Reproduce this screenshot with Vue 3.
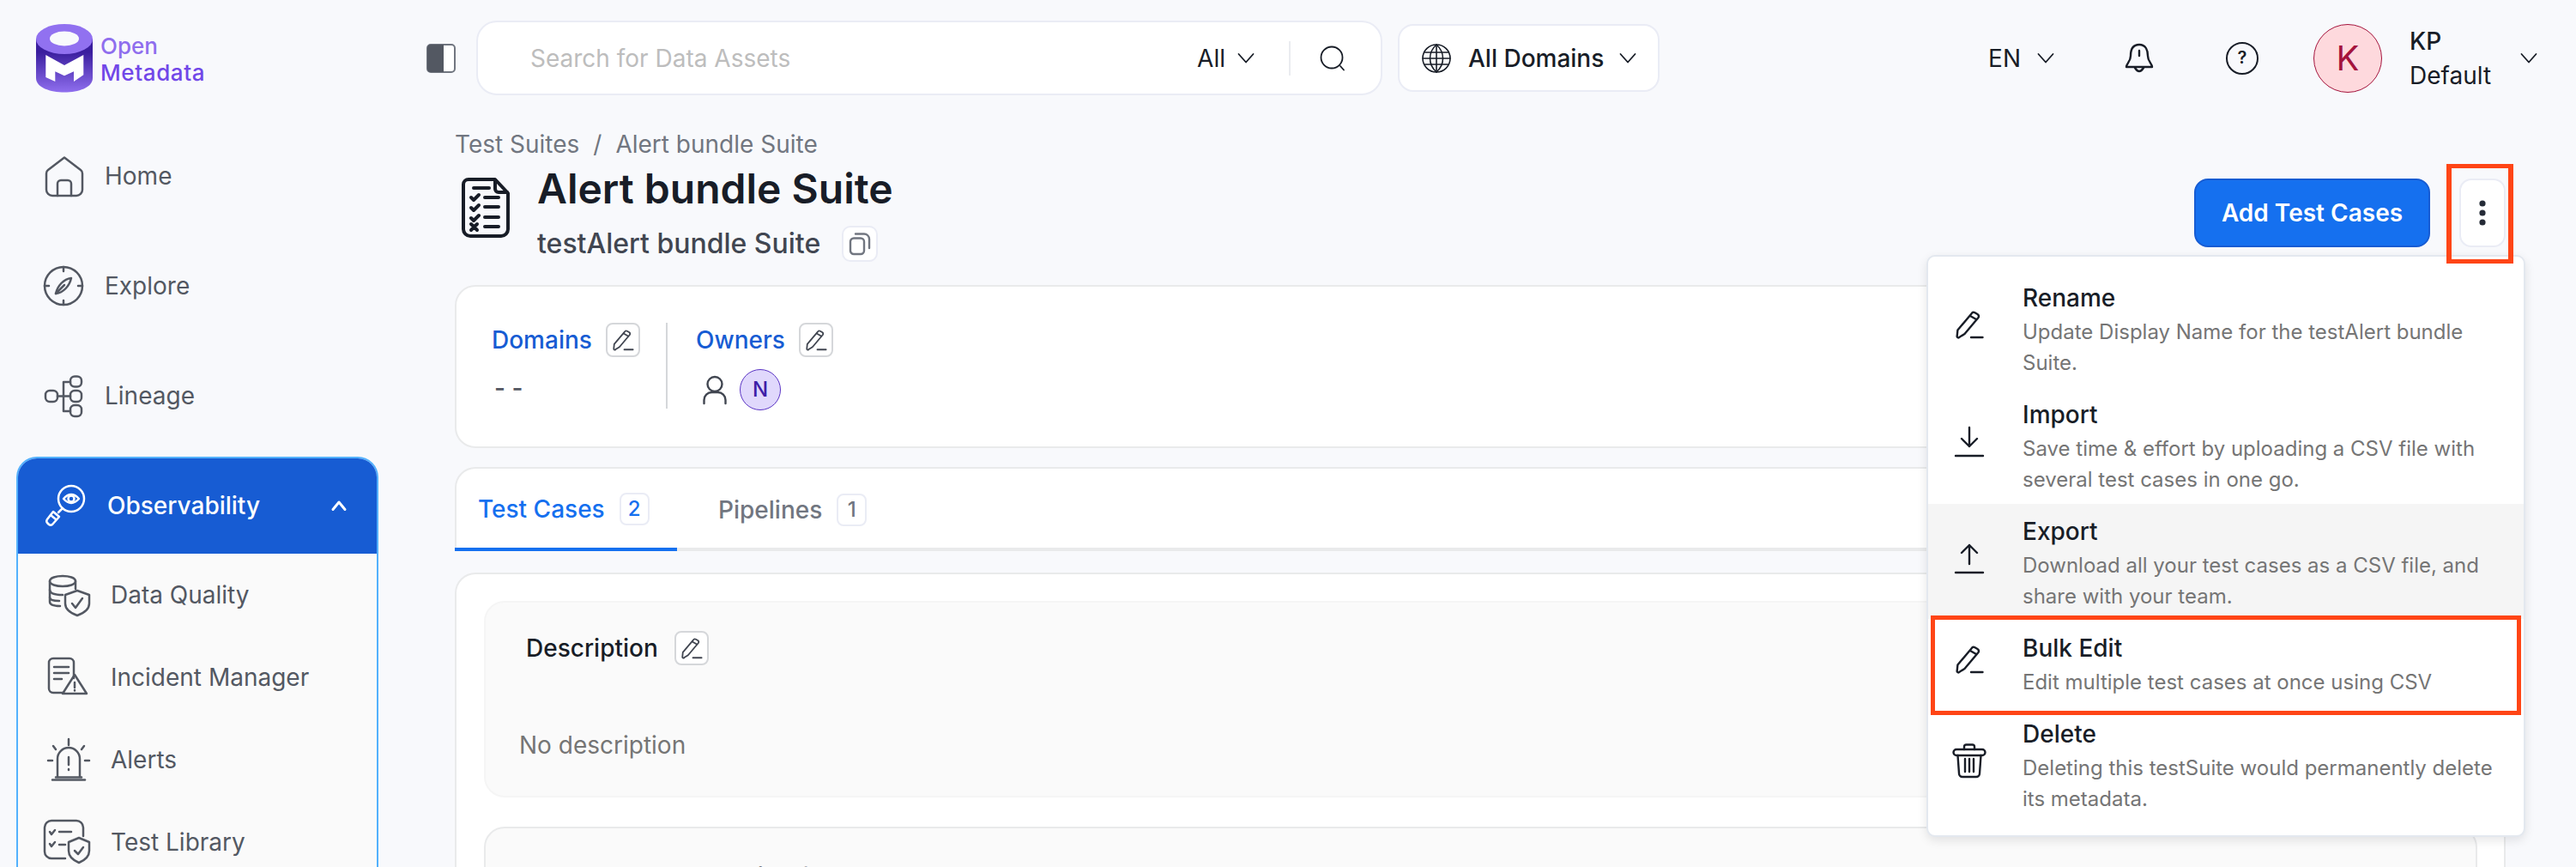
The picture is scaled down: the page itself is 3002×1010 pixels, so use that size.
<script setup>
import { h } from 'vue'

const icons = {
  home: { w: 48, h: 48, sw: 2.5, d: ['M25 2.5 L6 17 Q4 18.5 4 21 V40 a7 7 0 0 0 7 7 H39 a7 7 0 0 0 7-7 V21 Q46 18.5 44 17 Z', 'M17 47 V33 a4 4 0 0 1 4-4 h8 a4 4 0 0 1 4 4 V47'] },
  explore: { w: 48, h: 48, sw: 2.5, d: ['M24 2 a22 22 0 1 0 0 44 a22 22 0 1 0 0-44 Z', 'M24 2v5 M24 41v5 M2 24h5 M41 24h5', 'M33 15 C24 16 17 24 15 33 C24 32 31 24 33 15 Z', 'M15 33 L25 23'] },
  lineage: { w: 48, h: 48, sw: 2.5, d: ['M37 1.5 h3 a5 5 0 0 1 5 5 v2 a5 5 0 0 1-5 5 h-3 a5 5 0 0 1-5-5 v-2 a5 5 0 0 1 5-5 Z', 'M37 18 h3 a5 5 0 0 1 5 5 v3 a5 5 0 0 1-5 5 h-3 a5 5 0 0 1-5-5 v-3 a5 5 0 0 1 5-5 Z', 'M37 35 h3 a5 5 0 0 1 5 5 v3 a5 5 0 0 1-5 5 h-3 a5 5 0 0 1-5-5 v-3 a5 5 0 0 1 5-5 Z', 'M8 18 h4 a5 5 0 0 1 5 5 v3 a5 5 0 0 1-5 5 h-4 a5 5 0 0 1-5-5 v-3 a5 5 0 0 1 5-5 Z', 'M17 24.5 H32 M24 8 V42 M24 8 H32 M24 42 H32'] },
  observability: { w: 48, h: 48, sw: 2.5, d: ['M31 1 a15 15 0 1 0 0 30 a15 15 0 1 0 0-30 Z', 'M22 16 Q31 6 40 16 Q31 26 22 16 Z', 'M31 12.5 a3.5 3.5 0 1 0 0 7 a3.5 3.5 0 1 0 0-7 Z', 'M21 27 L16 32', 'M10 31 L17 37 L9 46 Q7 47.5 5 46 L3 44 Q1.5 42 3 40 Z', 'M7 35 l6 5'] },
  quality: { w: 48, h: 48, sw: 2.5, d: ['M2 8 C2 0 32 0 32 8 C32 16 2 16 2 8 Z', 'M2 8 V32 Q2 37 14 37', 'M32 8 V17', 'M2 18 Q2 24 17 24', 'M2 27 Q2 31 13 31', 'M34 19 L48 24 V34 Q48 43 34 48 Q20 43 20 34 V24 Z', 'M28 34 l4 5 l8-11'] },
  incident: { w: 48, h: 48, sw: 2.5, d: ['M18 42 H6 a5 5 0 0 1-5-5 V7 a5 5 0 0 1 5-5 H25 a5 5 0 0 1 5 5 V25', 'M7 12h17 M7 19h17 M7 26h9', 'M31 21 L45 43 H17 Z', 'M31 30 v6 M31 39 v.5'] },
  alerts: { w: 48, h: 48, sw: 2.5, d: ['M24 0 v7 M6 8 l3 4 M42 8 l-3 4 M0 25 h5 M43 25 h5', 'M11 44 V23 a13 13 0 0 1 26 0 V44', 'M24 21 v9 M24 35 v1', 'M9 44.5 H39', 'M5 47.5 H43'] },
  library: { w: 48, h: 48, sw: 2.5, d: ['M20 43 H4 a8 8 0 0 1-8-8 V7 a8 8 0 0 1 8-8 H33 a8 8 0 0 1 8 8 V17', 'M2 12 l2 3 4-5 M13 12 h14 M2 26 l2 3 4-5 M13 27 h7', 'M36 19 L48 24 V34 Q48 43 36 48 Q24 43 24 34 V24 Z', 'M31 34 l4 4 6-8'] },
  pencil: { w: 32, h: 32, sw: 2.4, d: ['M18.5 3.5 a3 3 0 0 1 4-1.2 l3 1.7 a3 3 0 0 1 1 4 L10.5 27 L4.5 30.8 a1.6 1.6 0 0 1-2.8-1.4 L2.4 22.5 Z', 'M17 6 L24 10', 'M18 31 H31.5'] },
  download: { w: 34, h: 35, sw: 2.4, d: ['M17 1 V23 M8 14 L17 23 L26 14', 'M1 34 H33'] },
  upload: { w: 34, h: 35, sw: 2.4, d: ['M17 24 V2 M8 11 L17 2 L26 11', 'M1 34 H33'] },
  trash: { w: 36, h: 40, sw: 2.4, d: ['M3 7 a2 2 0 0 0 0 7 H33 a2 2 0 0 0 0-7 Z', 'M12 7 V4 a2.5 2.5 0 0 1 2.5-2.5 H21.5 a2.5 2.5 0 0 1 2.5 2.5 V7', 'M4.5 14 L6 35 a4 4 0 0 0 4 4 H26 a4 4 0 0 0 4-4 L31.5 14', 'M13 18 V33 M18 18 V33 M23 18 V33'] },
  chevron: { w: 20, h: 12, sw: 1.8, d: ['M1.5 1 L10 10.5 L18.5 1'] },
  chevronUp: { w: 20, h: 12, sw: 3, d: ['M3 10.5 L10 2 L17 10.5'] },
  search: { w: 30, h: 30, sw: 1.8, d: ['M14 1.5 a12.5 12.5 0 1 0 0 25 a12.5 12.5 0 1 0 0-25 Z', 'M24 24 L28 28.5'] },
  globe: { w: 34, h: 34, sw: 1.6, d: ['M17 1 a16 16 0 1 0 0 32 a16 16 0 1 0 0-32 Z', 'M17 1 C7 10 7 24 17 33 C27 24 27 10 17 1 Z', 'M17 1 V33 M1 17 H33', 'M3.5 10 H30.5 M3.5 24 H30.5'] },
  bell: { w: 34, h: 36, sw: 2.4, d: ['M17 2 C9 2 7 9 7 15 C7 22 2 24 2 28 H32 C32 24 27 22 27 15 C27 9 25 2 17 2 Z', 'M12 29 Q17 37 22 29', 'M17 9 v6'] },
  copy: { w: 24, h: 26, sw: 2.4, d: ['M5 6.5 H13 a4 4 0 0 1 4 4 V21 a4 4 0 0 1-4 4 H5 a4 4 0 0 1-4-4 V10.5 a4 4 0 0 1 4-4 Z', 'M7 1.5 H17 a6 6 0 0 1 6 6 V18'] },
  user: { w: 28, h: 34, sw: 2.4, d: ['M14 2 a8.5 8.5 0 1 0 0 17 a8.5 8.5 0 1 0 0-17 Z', 'M1.5 33 V29 a9 9 0 0 1 9-9 H17.5 a9 9 0 0 1 9 9 V33'] },
  suite: { w: 56, h: 70, sw: 4, d: ['M8 2 H39 L54 18 V60 a8 8 0 0 1-8 8 H10 a8 8 0 0 1-8-8 V8 a6 6 0 0 1 6-6 Z', 'M39 3 V13 a4 4 0 0 0 4 4 H53', 'M14 12 H32', 'M11 23 l3 3 6-6 M27 23 H43', 'M11 35 l3 3 6-6 M27 34 H43', 'M11 47 l3 3 6-6 M27 46 H43', 'M11 54 l7 7 M18 54 l-7 7 M27 57 H43'] },
}

const Ico = (props) => {
  const icon = icons[props.name]
  return h(
    'svg',
    {
      width: icon.w,
      height: icon.h,
      viewBox: `0 0 ${icon.w} ${icon.h}`,
      fill: 'none',
      stroke: 'currentColor',
      'stroke-width': icon.sw,
      'stroke-linecap': 'round',
      'stroke-linejoin': 'round',
      overflow: 'visible',
    },
    icon.d.map((d) => h('path', { d })),
  )
}
Ico.props = ['name']

const navItems = [
  { label: 'Home', icon: 'home' },
  { label: 'Explore', icon: 'explore' },
  { label: 'Lineage', icon: 'lineage' },
]

const subItems = [
  { label: 'Data Quality', icon: 'quality' },
  { label: 'Incident Manager', icon: 'incident' },
  { label: 'Alerts', icon: 'alerts' },
  { label: 'Test Library', icon: 'library' },
]

const menuItems = [
  { title: 'Rename', desc: 'Update Display Name for the testAlert bundle Suite.', icon: 'pencil' },
  { title: 'Import', desc: 'Save time & effort by uploading a CSV file with several test cases in one go.', icon: 'download' },
  { title: 'Export', desc: 'Download all your test cases as a CSV file, and share with your team.', icon: 'upload', hover: true },
  { title: 'Bulk Edit', desc: 'Edit multiple test cases at once using CSV', icon: 'pencil' },
  { title: 'Delete', desc: 'Deleting this testSuite would permanently delete its metadata.', icon: 'trash' },
]

const columns = ['Status', 'Failed/Aborted Reason', 'Last Run', 'Name', 'Table']
</script>

<template>
  <div class="app">
    <header class="topbar">
      <div class="logo">
        <svg width="66" height="80" viewBox="0 0 66 80">
          <defs>
            <linearGradient id="cyl" x1="0" y1="0" x2="0" y2="1">
              <stop offset="0.25" stop-color="#3a1e9e" />
              <stop offset="1" stop-color="#8f6eee" />
            </linearGradient>
          </defs>
          <path d="M0 17 V63 C0 85 66 85 66 63 V17 Z" fill="url(#cyl)" />
          <ellipse cx="33" cy="17.5" rx="33" ry="17.5" fill="#9171f0" />
          <ellipse cx="33" cy="17" rx="17" ry="8.5" fill="#f8f9fc" />
          <path d="M11.3 36 L33 48 L55.3 36 V59.3 L44 67 V55.3 L33 60.3 L22.3 55.3 V67 L11.3 62 Z" fill="#fff" />
        </svg>
        <div class="logo-text">
          <span class="logo-open">Open</span>
          <span class="logo-meta">Metadata</span>
        </div>
      </div>

      <svg class="toggle" width="34" height="34" viewBox="0 0 34 34">
        <rect x="1" y="1" width="32" height="32" rx="4" fill="#fff" stroke="#717680" stroke-width="2" />
        <path d="M5 1 H20 V33 H5 a4 4 0 0 1-4-4 V5 a4 4 0 0 1 4-4 Z" fill="#535862" />
      </svg>

      <div class="search">
        <span class="placeholder">Search for Data Assets</span>
        <span class="search-all">All</span>
        <Ico name="chevron" />
        <span class="search-divider"></span>
        <Ico name="search" />
      </div>

      <div class="domains">
        <Ico name="globe" />
        <span class="domains-label">All Domains</span>
        <Ico name="chevron" />
      </div>

      <div class="top-right">
        <span class="lang">EN</span>
        <Ico name="chevron" class="lang-chevron" />
        <Ico name="bell" class="bell" />
        <span class="help">?</span>
        <span class="avatar">K</span>
        <div class="who">
          <span class="who-name">KP</span>
          <span>Default</span>
        </div>
        <Ico name="chevron" />
      </div>
    </header>

    <div class="body">
      <aside class="sidebar">
        <a v-for="item in navItems" :key="item.label" class="nav-item">
          <Ico :name="item.icon" />
          <span>{{ item.label }}</span>
        </a>
        <div class="nav-group">
          <div class="nav-group-head">
            <Ico name="observability" />
            <span>Observability</span>
            <Ico name="chevronUp" class="group-chevron" />
          </div>
          <a v-for="item in subItems" :key="item.label" class="sub-item">
            <Ico :name="item.icon" />
            <span>{{ item.label }}</span>
          </a>
        </div>
      </aside>

      <main class="main">
        <div class="crumbs">
          <span>Test Suites</span>
          <span class="crumb-sep">/</span>
          <span>Alert bundle Suite</span>
        </div>

        <div class="heading">
          <Ico name="suite" class="suite-icon" />
          <div class="heading-text">
            <h1>Alert bundle Suite</h1>
            <div class="fqn">
              <span>testAlert bundle Suite</span>
              <button class="copy-btn"><Ico name="copy" /></button>
            </div>
          </div>
          <div class="actions">
            <button class="add-btn">Add Test Cases</button>
            <button class="more-btn">
              <svg width="8" height="30" viewBox="0 0 8 30" fill="#252b37">
                <circle cx="4" cy="4" r="3.6" />
                <circle cx="4" cy="15" r="3.6" />
                <circle cx="4" cy="26" r="3.6" />
              </svg>
            </button>
          </div>
        </div>

        <section class="info-card">
          <div class="info-col domains-col">
            <div class="info-label">
              <span>Domains</span>
              <button class="edit-btn"><Ico name="pencil" /></button>
            </div>
            <div class="dashes">- -</div>
          </div>
          <div class="info-col owners-col">
            <div class="info-label">
              <span>Owners</span>
              <button class="edit-btn"><Ico name="pencil" /></button>
            </div>
            <div class="owners">
              <Ico name="user" />
              <span class="owner-avatar">N</span>
            </div>
          </div>
        </section>

        <nav class="tabs">
          <div class="tab tab-active">Test Cases <span class="badge">2</span></div>
          <div class="tab">Pipelines <span class="badge">1</span></div>
        </nav>

        <section class="content">
          <div class="panel desc-panel">
            <div class="desc-head">
              <span>Description</span>
              <button class="edit-btn"><Ico name="pencil" /></button>
            </div>
            <p class="no-desc">No description</p>
          </div>
          <div class="panel table-panel">
            <span v-for="col in columns" :key="col">{{ col }}</span>
          </div>
        </section>
      </main>
    </div>

    <div class="menu">
      <div v-for="item in menuItems" :key="item.title" class="menu-item" :class="{ hovered: item.hover }">
        <span class="menu-icon"><Ico :name="item.icon" /></span>
        <div class="menu-copy">
          <div class="menu-title">{{ item.title }}</div>
          <div class="menu-desc">{{ item.desc }}</div>
        </div>
      </div>
    </div>

    <div class="mark mark-more"></div>
    <div class="mark mark-bulk"></div>
  </div>
</template>

<style scoped>
.app {
  position: relative;
  width: 3002px;
  height: 1010px;
  overflow: hidden;
  background: #f8f9fc;
  color: #181d27;
  font-family: Inter, 'Liberation Sans', sans-serif;
  font-size: 28px;
  line-height: 40px;
}
button {
  font-family: inherit;
  padding: 0;
  cursor: pointer;
}
svg {
  display: block;
  flex: none;
}

.topbar {
  display: flex;
  align-items: center;
  height: 135px;
  padding-right: 45px;
}
.logo {
  display: flex;
  align-items: center;
  width: 497px;
  padding-left: 42px;
  box-sizing: border-box;
  gap: 9px;
}
.logo-text {
  display: flex;
  flex-direction: column;
  font-weight: 500;
  font-size: 26px;
  line-height: 31px;
  letter-spacing: 0.6px;
  margin-top: 2px;
}
.logo-open {
  color: #8f6eee;
  letter-spacing: 0;
}
.logo-meta {
  color: #7147e8;
}
.toggle {
  margin-right: 24px;
}
.search {
  display: flex;
  align-items: center;
  width: 1056px;
  height: 87px;
  box-sizing: border-box;
  padding: 0 41px 0 61px;
  background: #fff;
  border: 2px solid #eaecf5;
  border-radius: 24px;
}
.placeholder {
  flex: 1;
  color: #bdbdbd;
}
.search-all {
  margin-right: 14px;
}
.search-divider {
  width: 2px;
  height: 40px;
  margin: 0 34px 0 40px;
  background: #eaecf0;
}
.domains {
  display: flex;
  align-items: center;
  height: 79px;
  width: 305px;
  box-sizing: border-box;
  margin-left: 18px;
  padding: 0 26px;
  background: #fff;
  border: 2px solid #eaecf5;
  border-radius: 18px;
}
.domains-label {
  margin: 0 18px 0 20px;
  font-weight: 500;
  white-space: nowrap;
}
.top-right {
  display: flex;
  align-items: center;
  margin-left: auto;
}
.lang {
  margin-right: 19px;
}
.lang-chevron {
  margin-right: 82px;
}
.bell {
  margin-right: 84px;
}
.help {
  width: 38px;
  height: 38px;
  box-sizing: border-box;
  margin-right: 64px;
  border: 2.4px solid #181d27;
  border-radius: 50%;
  font-size: 20px;
  font-weight: 600;
  line-height: 33px;
  text-align: center;
}
.avatar {
  width: 80px;
  height: 80px;
  box-sizing: border-box;
  margin-right: 32px;
  background: #fed9dd;
  border: 1.5px solid #a4133c;
  border-radius: 50%;
  color: #a4133c;
  font-size: 40px;
  line-height: 77px;
  text-align: center;
}
.who {
  display: flex;
  flex-direction: column;
  width: 129px;
}
.who-name {
  font-weight: 500;
}

.body {
  display: flex;
}
.sidebar {
  width: 530px;
  flex: none;
  padding-top: 6px;
  box-sizing: border-box;
}
.nav-item {
  display: flex;
  align-items: center;
  gap: 24px;
  height: 128px;
  padding-left: 50px;
  color: #535862;
}
.nav-group {
  width: 422px;
  box-sizing: border-box;
  margin: 7px 0 0 19px;
  border: 2px solid #53b1fd;
  border-bottom: 0;
  border-radius: 24px 24px 0 0;
  background: #fafafa;
  overflow: hidden;
  padding-bottom: 100px;
}
.nav-group-head {
  display: flex;
  align-items: center;
  gap: 25px;
  height: 112px;
  margin-top: -1px;
  padding: 0 34px 0 31px;
  background: #175cd3;
  color: #fff;
  font-weight: 500;
}
.group-chevron {
  margin-left: auto;
}
.sub-item {
  display: flex;
  align-items: center;
  gap: 25px;
  height: 96px;
  padding-left: 35px;
  color: #535862;
}

.main {
  flex: 1;
  padding-right: 82px;
  min-width: 0;
}
.crumbs {
  display: flex;
  height: 36px;
  margin-top: 15px;
  line-height: 36px;
  color: #717680;
}
.crumb-sep {
  margin: 0 16px 0 16px;
}
.heading {
  display: flex;
  align-items: flex-start;
  height: 140px;
  margin-top: 6px;
}
.suite-icon {
  margin: 15px 32px 0 8px;
}
.heading-text h1 {
  margin: 0;
  font-size: 48px;
  font-weight: 600;
  line-height: 56px;
}
.fqn {
  display: flex;
  align-items: center;
  gap: 25px;
  margin-top: 15px;
  color: #414651;
  font-size: 32px;
  font-weight: 500;
}
.copy-btn {
  width: 42px;
  height: 42px;
  display: flex;
  align-items: center;
  justify-content: center;
  background: #fff;
  border: 2px solid #eaecf5;
  border-radius: 10px;
  color: #717680;
}
.actions {
  display: flex;
  align-items: center;
  gap: 34px;
  margin-left: auto;
  margin-top: 16px;
}
.add-btn {
  width: 275px;
  height: 80px;
  background: #1570ef;
  border: 2px solid #175cd3;
  border-radius: 16px;
  color: #fff;
  font-size: 28px;
  font-weight: 600;
}
.more-btn {
  width: 54px;
  height: 80px;
  display: flex;
  align-items: center;
  justify-content: center;
  background: #fff;
  border: 2px solid #eaecf5;
  border-radius: 14px;
}

.info-card {
  display: flex;
  height: 190px;
  box-sizing: border-box;
  padding: 42px 0 0 41px;
  background: #fff;
  border: 2px solid #e9eaeb;
  border-radius: 24px;
}
.info-col {
  display: flex;
  flex-direction: column;
  height: 100px;
}
.domains-col {
  width: 205px;
  box-sizing: border-box;
  border-right: 2px solid #d5d7da;
  margin-top: 0;
}
.domains-col .info-label {
  gap: 16px;
  margin-top: 0;
}
.owners-col {
  margin: 2px 0 0 33px;
}
.info-label {
  display: flex;
  align-items: center;
  gap: 16px;
  height: 40px;
  margin-top: -2px;
  color: #175cd3;
  font-weight: 500;
}
.edit-btn {
  width: 40px;
  height: 40px;
  display: flex;
  align-items: center;
  justify-content: center;
  background: #fff;
  border: 2px solid #d5d7da;
  border-radius: 8px;
  color: #414651;
}
.edit-btn svg {
  width: 24px;
  height: 24px;
}
.dashes {
  margin: 16px 0 0 3px;
  color: #535862;
  font-weight: 500;
}
.owners {
  display: flex;
  align-items: center;
  gap: 15px;
  margin: 14px 0 0 8px;
  color: #414651;
}
.owner-avatar {
  width: 48px;
  height: 48px;
  box-sizing: border-box;
  background: #e0d8fc;
  border: 1.5px solid #5b35c5;
  border-radius: 50%;
  color: #3e1ea8;
  font-size: 24px;
  font-weight: 500;
  line-height: 45px;
  text-align: center;
}

.tabs {
  display: flex;
  height: 98px;
  box-sizing: border-box;
  margin-top: 22px;
  background: #fff;
  border: 2px solid #e9eaeb;
  border-bottom: 4px solid #e9eaeb;
  border-radius: 24px 24px 0 0;
}
.tab {
  display: flex;
  align-items: center;
  gap: 17px;
  height: 96px;
  margin-left: 48px;
  color: #717680;
  font-weight: 500;
}
.tab-active {
  width: 259px;
  box-sizing: border-box;
  margin: -2px 0 -4px -2px;
  height: 98px;
  padding: 4px 0 0 27px;
  border-bottom: 4px solid #1570ef;
  color: #1570ef;
}
.badge {
  width: 35px;
  height: 38px;
  box-sizing: border-box;
  border: 2px solid #eaecf5;
  border-radius: 8px;
  font-size: 24px;
  line-height: 34px;
  text-align: center;
}

.content {
  margin-top: 25px;
  padding: 31px 31px 0 32px;
  background: #fff;
  border: 2px solid #e9eaeb;
  border-bottom: 0;
  border-radius: 24px 24px 0 0;
}
.panel {
  background: #fafafa;
  border: 2px solid #f5f5f5;
  border-radius: 24px;
}
.desc-panel {
  height: 229px;
  box-sizing: border-box;
  padding: 33px 0 0 39px;
}
.desc-head {
  display: flex;
  align-items: center;
  gap: 19px;
  padding-left: 8px;
  font-weight: 500;
}
.no-desc {
  margin: 73px 0 0;
  color: #757575;
}
.table-panel {
  display: grid;
  grid-template-columns: 245px 520px 328px 301px 1fr;
  height: 200px;
  box-sizing: border-box;
  margin-top: 34px;
  padding: 36px 0 0 40px;
  border-color: #e9eaeb;
  color: #717680;
  font-weight: 500;
}

.menu {
  position: absolute;
  top: 297px;
  left: 2245px;
  width: 698px;
  box-sizing: border-box;
  padding: 16px 0;
  display: flex;
  flex-direction: column;
  gap: 2px;
  background: #fff;
  border: 2px solid #e3e8ef;
  border-radius: 10px;
  box-shadow: 0 4px 12px rgba(10, 13, 18, 0.1);
}
.menu-item {
  display: flex;
  align-items: center;
  gap: 45px;
  padding: 12px 20px 8px 31px;
}
.menu-item.hovered {
  background: #f5f5f5;
}
.menu-icon {
  width: 34px;
  display: flex;
  justify-content: center;
  margin-bottom: 12px;
  flex: none;
}
.menu-title {
  font-weight: 500;
}
.menu-desc {
  margin-top: 2px;
  color: #757575;
  font-size: 24px;
  line-height: 36px;
}

.mark {
  position: absolute;
  box-sizing: border-box;
  border: 5px solid #ff4516;
}
.mark-more {
  top: 191px;
  left: 2851px;
  width: 78px;
  height: 116px;
  border-width: 5px 6px;
}
.mark-bulk {
  top: 717px;
  left: 2250px;
  width: 688px;
  height: 116px;
}
</style>

<style>
html,
body {
  margin: 0;
  background: #f8f9fc;
}
</style>
